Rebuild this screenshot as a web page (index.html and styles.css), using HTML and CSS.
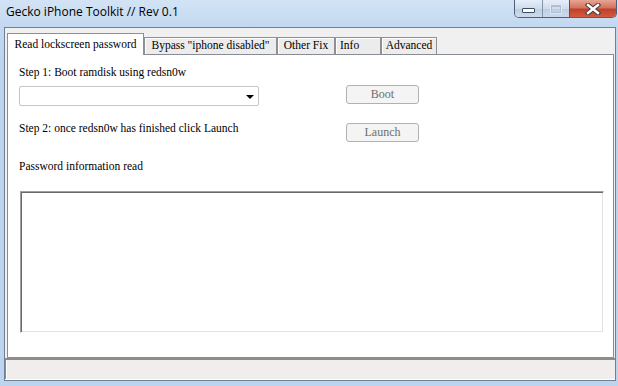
FILE: index.html
```html
<!DOCTYPE html>
<html lang="en">
    <head>
        <title>Gecko iPhone Toolkit</title>
        <meta charset="UTF-8">
        <meta name="viewport" content="width=device-width, initial-scale=1">
        <link rel="stylesheet" href="styles.css">
    </head>

    <body>
        <div class="window">
            <div class="titlebar">
                <span class="title">Gecko iPhone Toolkit // Rev 0.1</span>
                <div class="caption-buttons">
                    <div class="cap-btn cap-min"><span class="min-glyph"></span></div>
                    <div class="cap-btn cap-max"><span class="max-glyph"></span></div>
                    <div class="cap-btn cap-close">
                        <svg width="18" height="12" viewBox="0 0 18 12">
                            <path d="M4 2 L14 10 M14 2 L4 10" stroke="#4a3a3a" stroke-width="4.5" stroke-linecap="square" fill="none"/>
                            <path d="M4 2 L14 10 M14 2 L4 10" stroke="#ffffff" stroke-width="2.4" stroke-linecap="square" fill="none"/>
                        </svg>
                    </div>
                </div>
            </div>

            <div class="client">
                <div class="tabs">
                    <div class="tab active tab-read">Read lockscreen password</div>
                    <div class="tab tab-bypass">Bypass "iphone disabled"</div>
                    <div class="tab tab-other">Other Fix</div>
                    <div class="tab tab-info">Info</div>
                    <div class="tab tab-adv">Advanced</div>
                </div>

                <div class="panel">
                    <p class="label step1">Step 1: Boot ramdisk using redsn0w</p>
                    <div class="row row-boot">
                        <div class="combo"><span class="combo-arrow"></span></div>
                        <div class="button">Boot</div>
                    </div>
                    <div class="row row-launch">
                        <p class="label">Step 2: once redsn0w has finished click Launch</p>
                        <div class="button">Launch</div>
                    </div>
                    <p class="label pw-label">Password information read</p>
                    <div class="textbox"></div>
                </div>

                <div class="statusbar"></div>
            </div>
        </div>
    </body>
</html>
```

FILE: styles.css
```css
body {
    margin: 0;
    background-color: #bcd4ee;
}
.window {
    width: 618px;
    height: 386px;
    display: flex;
    flex-direction: column;
    background: linear-gradient(180deg, #d3e3f5 0px, #c2d8f0 27px, #bcd4ee 60px);
    overflow: hidden;
}

/* title bar */
.titlebar {
    height: 27px;
    display: flex;
    justify-content: space-between;
    align-items: flex-start;
    flex-shrink: 0;
}
.title {
    font-family: "Open Sans", sans-serif;
    font-size: 12px;
    color: #000;
    padding-left: 6px;
    padding-top: 4px;
    line-height: 16px;
}
.caption-buttons {
    display: flex;
    height: 18px;
    margin-right: 1px;
    border: 1px solid #4f5f78;
    border-top: 0;
    border-radius: 0 0 5px 5px;
    overflow: hidden;
    box-sizing: border-box;
}
.cap-btn {
    height: 100%;
    display: flex;
    align-items: center;
    justify-content: center;
    box-sizing: border-box;
}
.cap-min {
    width: 28px;
    background: linear-gradient(180deg, #e6eef8, #cfdcec 50%, #bccde3 51%, #cddbeb);
    border-right: 1px solid #8395ad;
}
.cap-max {
    width: 27px;
    background: linear-gradient(180deg, #e6eef8, #cfdcec 50%, #bccde3 51%, #cddbeb);
    border-right: 1px solid #6a4a4a;
}
.cap-close {
    width: 46px;
    background: linear-gradient(180deg, #e8a493, #d2745f 45%, #c0412b 55%, #d35a3e);
}
.min-glyph {
    width: 11px;
    height: 3px;
    margin-top: 4px;
    background-color: #fff;
    border: 1px solid #3b4b63;
    border-radius: 1px;
}
.max-glyph {
    width: 8px;
    height: 5px;
    border: 1px solid #aebfd4;
    border-top-width: 2px;
    box-shadow: 0 0 0 1px #dfe8f3;
}

/* client area */
.client {
    flex-grow: 1;
    margin: 0 2px 5px 4px;
    background-color: #f0f0f0;
    border: 1px solid #6e7f97;
    display: flex;
    flex-direction: column;
}
.tabs {
    height: 26px;
    padding-top: 5px;
    padding-left: 2px;
    box-sizing: border-box;
    display: flex;
    align-items: flex-end;
    flex-shrink: 0;
}
.tab {
    font-family: "Liberation Serif", serif;
    font-size: 11.5px;
    line-height: 15px;
    height: 17px;
    box-sizing: border-box;
    border: 1px solid #8e9095;
    border-bottom: 0;
    background-color: #ececec;
    box-shadow: inset 1px 1px 0 #fff;
    text-align: center;
    white-space: nowrap;
    color: #000;
}
.tab.active {
    height: 22px;
    margin-bottom: -1px;
    background-color: #fff;
    box-shadow: none;
    padding-top: 3px;
    position: relative;
    z-index: 1;
}
.tab-read { width: 137px; }
.tab-bypass { width: 133px; }
.tab-other { width: 58px; }
.tab-info { width: 46px; text-align: left; padding-left: 4px; }
.tab-adv { width: 56px; }

.panel {
    height: 304px;
    margin: 0 1px 0 2px;
    box-sizing: border-box;
    background-color: #fff;
    border: 1px solid #898c95;
    padding: 0 9px 0 11px;
    flex-shrink: 0;
}
.label {
    font-family: "Liberation Serif", serif;
    font-size: 11.5px;
    line-height: 14px;
    margin: 0;
    color: #000;
    white-space: nowrap;
}
.step1 {
    margin-top: 10px;
}
.row {
    display: grid;
    grid-template-columns: 327px 73px;
    align-items: start;
}
.row-boot {
    margin-top: 6px;
}
.row-launch {
    margin-top: 15px;
}
.row-launch .button {
    margin-top: 2px;
}
.pw-label {
    margin-top: 17px;
}
.combo {
    width: 240px;
    height: 20px;
    margin-top: 1px;
    box-sizing: border-box;
    border: 1px solid #c5c5c5;
    border-radius: 2px;
    background-color: #fff;
    display: flex;
    justify-content: flex-end;
    align-items: center;
    padding-right: 4px;
}
.combo-arrow {
    width: 0;
    height: 0;
    border-left: 4px solid transparent;
    border-right: 4px solid transparent;
    border-top: 4px solid #000;
    margin-top: 1px;
}
.button {
    width: 73px;
    height: 19px;
    box-sizing: border-box;
    border: 1px solid #adb2b5;
    border-radius: 3px;
    background-color: #f4f4f4;
    color: #6d6d6d;
    font-family: "Liberation Serif", serif;
    font-size: 12px;
    line-height: 16px;
    text-align: center;
}
.textbox {
    width: 584px;
    height: 142px;
    margin-top: 18px;
    margin-left: 1px;
    box-sizing: border-box;
    background-color: #fff;
    border: 1px solid;
    border-color: #a0a0a0 #fff #fff #a0a0a0;
    box-shadow: inset 1px 1px 0 #696969, inset -1px -1px 0 #e3e3e3;
}

.statusbar {
    flex-grow: 1;
    background-color: #f0edec;
    border-top: 1px solid #8c8c8c;
    border-bottom: 1px solid #fff;
    box-shadow: inset 1px 1px 0 #8c8c8c, inset 2px 0 0 #fff;
}
```
